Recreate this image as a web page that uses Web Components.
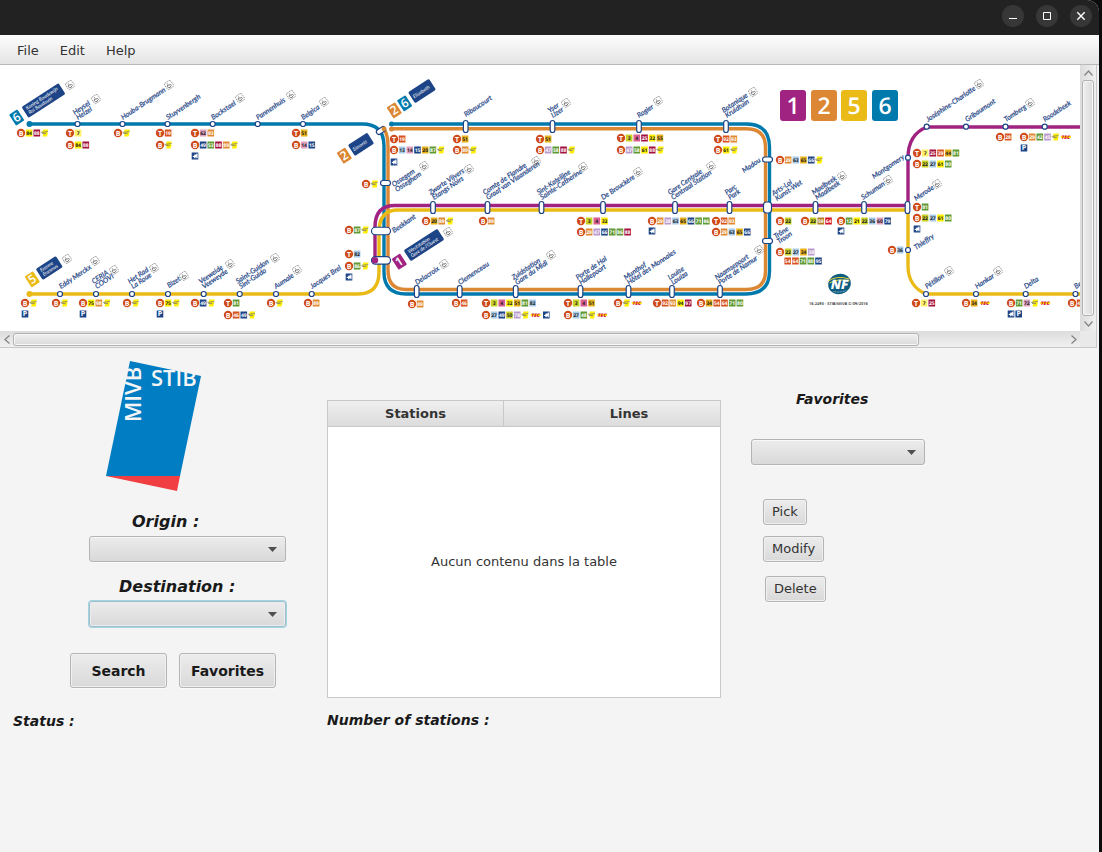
<!DOCTYPE html>
<html lang="en">
<head>
<meta charset="utf-8">
<title>STIB route planner</title>
<style>
  html, body { margin: 0; min-height: 100%; background: #0b0b0c; }
  body { font: 13px/18px "DejaVu Sans", Verdana, sans-serif; color: #333; }
</style>
</head>
<body>
<planner-window></planner-window>

<script>
function define(name, html, setup) {
  const template = document.createElement('template');
  template.innerHTML = html;
  customElements.define(name, class extends HTMLElement {
    constructor() {
      super();
      this.attachShadow({ mode: 'open' }).append(template.content.cloneNode(true));
    }
    connectedCallback() { if (setup) setup(this.shadowRoot, this); }
  });
}

/* ---------- window chrome ---------- */
define('title-bar', `
<style>
  :host { display: flex; justify-content: flex-end; align-items: flex-start; gap: 12px; height: 30px; padding: 5px 7px 0 0; background: #222; border-radius: 0 12px 0 0; }
  button { width: 22px; height: 22px; padding: 0; border: 0; border-radius: 50%; background: #373737; display: grid; place-items: center; }
  svg { display: block; }
</style>
<button aria-label="Minimize"><svg width="22" height="22" fill="none" stroke="#fff"><path d="M7 13.500h8"/></svg></button>
<button aria-label="Maximize"><svg width="22" height="22" fill="none" stroke="#fff"><path d="M7.500 7.500h7v7h-7z"/></svg></button>
<button aria-label="Close"><svg width="22" height="22" fill="none" stroke="#fff" stroke-width="1.4"><path d="M7.300 7.300l7.400 7.400M14.700 7.300l-7.400 7.400"/></svg></button>`);

define('menu-strip', `
<style>
  :host { display: flex; gap: 1px; box-sizing: border-box; height: 30px; padding-left: 7px; background: linear-gradient(#fdfdfd, #e4e4e4); border-bottom: 1px solid #b9b9b9; }
  button { font: inherit; color: inherit; border: 0; background: none; padding: 2px 10px 0; }
</style>
<button>File</button><button>Edit</button><button>Help</button>`);

/* ---------- scroll pane ---------- */
define('scroll-view', `
<style>
  :host { display: grid; grid-template-columns: minmax(0, 1fr) 16px; grid-template-rows: auto 16px; margin-right: 2px; border-right: 1px solid #c8c8c8; border-bottom: 1px solid #c8c8c8; background: #e9e9e9; }
  .view { overflow: hidden; background: #fff; }
  .bar { display: flex; align-items: stretch; }
  .v { flex-direction: column; background: linear-gradient(90deg, #dcdcdc, #f0f0f0); }
  .h { background: linear-gradient(#dcdcdc, #f0f0f0); }
  .track { flex: 1; display: flex; min-width: 0; min-height: 0; }
  .v .track { flex-direction: column; padding: 0 2px; }
  .h .track { padding: 2px 0 1px; }
  .thumb { box-sizing: border-box; border: 1px solid #b0b0b0; border-radius: 3px; box-shadow: inset 0 0 0 1px #f8f8f8; }
  .v .thumb { flex: 0 0 100%; background: linear-gradient(90deg, #efefef, #dadada); }
  .h .thumb { flex: 0 0 86%; background: linear-gradient(#efefef, #dadada); }
  button { border: 0; padding: 0; background: none; display: grid; place-items: center; }
  .v button { height: 15px; } .h button { width: 13px; }
  svg { fill: none; stroke: #858585; stroke-width: 1.3; }
</style>
<div class="view"><slot></slot></div>
<div class="bar v">
  <button aria-label="Scroll up"><svg width="9" height="6"><path d="M.5 5.500l4-4.500 4 4.500"/></svg></button>
  <div class="track"><div class="thumb"></div></div>
  <button aria-label="Scroll down"><svg width="9" height="6"><path d="M.5.500l4 4.500 4-4.500"/></svg></button>
</div>
<div class="bar h">
  <button aria-label="Scroll left"><svg width="6" height="9"><path d="M5.500.500l-4.500 4 4.500 4"/></svg></button>
  <div class="track"><div class="thumb"></div></div>
  <button aria-label="Scroll right"><svg width="6" height="9"><path d="M.5.500l4.500 4-4.500 4"/></svg></button>
</div>`);

/* ---------- metro map ---------- */
const NAVY = '#1d4486';
const LINE = { 1: '#a02382', 2: '#db8733', 5: '#eaba16', 6: '#007aad' };
const CHIP = {
  y: ['#fff000', '#222'], L: ['#fff26a', '#222'], Y: ['#e8b01b', '#222'], l: ['#c9d127', '#222'],
  r: ['#a3103c', '#fff'], o: ['#d8531f', '#fff'], O: ['#e08a35', '#fff'], g: ['#5f9a35', '#fff'],
  p: ['#dfa0bf', '#222'], P: ['#ba9acd', '#fff'], b: ['#a9cbea', '#222'], n: [NAVY, '#fff'],
  k: ['#d95f90', '#222'], e: ['#d4121f', '#fff'], w: ['#b57d1d', '#fff']
};
/* x, baseline y, text; "/" parts the two language versions */
const LABELS = [
  [78,120,'Heysel/Heizel'],[123,120,'Houba-Brugmann'],[168,120,'Stuyvenbergh'],[213,120,'Bockstael'],[258,120,'Pannenhuis'],[303,120,'Belgica'],
  [466,117,'Ribaucourt'],[553,118,'Yser/IJzer'],[639,118,'Rogier'],[727,118,'Botanique/Kruidtuin'],[744,173,'Madou'],
  [397,192,'Ossegem/Osseghem'],[434,200,'Zwarte Vijvers/Étangs Noirs'],[488,200,'Comte de Flandre/Graaf van Vlaanderen'],[542,200,'Sint-Katelijne/Sainte-Catherine'],
  [603,200,'De Brouckère'],[673,200,'Gare Centrale/Centraal Station'],[730,200,'Parc/Park'],[777,201,'Arts-Loi/Kunst-Wet'],[817,200,'Maelbeek/Maalbeek'],
  [863,200,'Schuman'],[916,201,'Merode'],[874,179,'Montgomery'],[394,233,'Beekkant'],[779,244,'Trône/Troon'],[916,250,'Thieffry'],
  [927,289,'Pétillon'],[977,289,'Hankar'],[1026,289,'Delta'],[1076,289,'Beaulieu'],
  [928,122,'Joséphine-Charlotte'],[967,122,'Gribaumont'],[1006,122,'Tomberg'],[1045,122,'Roodebeek'],
  [61,289,'Eddy Merckx'],[97,289,'CERIA/COOVI'],[133,289,'Het Rad/La Roue'],[169,288,'Bizet'],[204,289,'Veeweide/Veeweyde'],[241,289,'Saint-Guidon/Sint-Guido'],
  [276,289,'Aumale'],[312,289,'Jacques Brel'],[417,285,'Delacroix'],[460,285,'Clemenceau'],[517,285,'Zuidstation/Gare du Midi'],
  [581,285,'Porte de Hal/Hallepoort'],[629,285,'Munthof/Hôtel des Monnaies'],[673,285,'Louise/Louiza'],[720,285,'Naamsepoort/Porte de Namur']
];
/* x and y of the mode letter, then the letter and the connecting routes */
const ROWS = [
  [21,133,'B 84y 88r D'],[70,133,'T 7L'],[70,145,'B 84y 88r'],[118,133,'B D'],[160,133,'T 19o'],[160,145,'B D'],
  [195,133,'T 62p 93O'],[195,145,'B 49n 53g 88r 89O D'],[195,156,'S'],[296,133,'T 51Y'],[296,145,'B 14p 15n'],
  [394,139,'T 19o'],[394,150,'B 13b 14p 15n 20Y 87g D'],[394,162,'S'],[457,139,'T 51Y'],[457,150,'B 89O D'],
  [540,139,'T 51Y'],[540,150,'B 47P 58g 88r D'],[366,184,'B D'],[621,138,'T 3l 4k 25r 32y 55Y'],[621,150,'B 47P 58g 61y 88r D'],
  [718,139,'T 92o 93O'],[718,150,'B 61y D'],[780,160,'B 29O 63b 65Y 66n D'],
  [1000,137,'B 28o'],[1024,137,'B 29O 42g 45P D C'],[1024,148,'P'],[917,153,'T 7L 25r 39o 44Y 81g'],[917,164,'B 22l 27b 61y 80g'],
  [917,207,'T 81g'],[917,218,'B 22l 27b 61y 80g'],[917,229,'S'],[892,250,'B 36b'],[916,303,'T 7L 25r'],[966,303,'B 34Y C'],
  [1011,303,'B 71g 72p D C'],[1011,314,'S P'],[1072,303,'B 41o 72p'],[841,221,'B 12g 21y 22l 36b 60p 79n'],[841,231,'S'],
  [805,221,'B 22l 59w 64e'],[780,221,'B 22l'],[780,252,'B 22l 27b 34Y 38P'],[780,261,'- 54o 64o 71g 80g 95n'],
  [716,221,'T 92o 93O'],[716,232,'B 29O 63b 65Y 66n'],[652,221,'B 29O 38P 63b 65Y 66n 71g 86g'],[652,231,'S'],
  [581,221,'T 3l 4k 32y'],[581,232,'B 29O 47P 66n 71g 86g 88r'],[568,303,'T 3l 4k 51Y'],[568,315,'B 27b 48g D C'],
  [618,303,'B D C'],[657,303,'T 92o 93O 94y 97r'],[701,303,'B 34Y 54o 64o 71g 80g'],[426,221,'B 20Y 89O D'],[483,221,'B 89O'],
  [349,230,'B 87g D'],[349,254,'T 82b'],[349,266,'B 86g D'],[349,277,'S'],[412,304,'B 89O'],[456,303,'B 46o'],
  [486,303,'T 3l 4k 32y 51Y 81g 82b'],[486,315,'B 27b 49n 50l 78P D C S'],[308,303,'B 89O'],
  [25,303,'B D'],[25,314,'P'],[56,303,'B D'],[83,303,'B 75y 98O D'],[83,314,'P'],[127,303,'B D'],[160,303,'B 75y D'],[160,314,'P'],
  [195,303,'B 49n D'],[228,303,'T 81g'],[228,315,'B 46o 49n D'],[271,303,'B D']
];
const LIFTS = [[70,85],[96,99],[169,85],[240,98],[291,95],[324,102],[424,166],[469,169],[536,161],[566,103],[658,101],[753,92],[583,167],[638,172],[711,166],
  [979,84],[1030,103],[842,176],[888,180],[937,184],[67,259],[95,261],[114,270],[154,268],[184,276],[230,264],[275,258],[297,270],[448,232],[444,264],[551,255],[759,250],[949,271],[998,271]];

function drawMap() {
  let s = '';
  const path = (d, c) => { s += `<path d="${d}" fill="none" stroke="${c}" stroke-width="3.400"/>`; };
  path('M29 124H362Q384 124 384 146V272Q384 294 406 294H746Q769.500 294 769.500 271V147Q769.500 124 746 124H391', LINE[6]);
  path('M384 129Q388 135 388 146V270Q388 289.500 406 289.500H746Q765.500 289.500 765.500 271V147Q765.500 128.800 746 128.800H391', LINE[2]);
  path('M29 294H358Q379 294 379 272V232Q379 210 398 210H908V266C908 281 916 290 926 294H1120', LINE[5]);
  path('M375 260V227Q375 205.500 395 205.500H908V158C908 142 914 132 927 127H1120', LINE[1]);
  const dot = (x, y, c, r) => { s += `<circle cx="${x}" cy="${y}" r="${r || 3}" fill="${c}"/>`; };
  dot(29.500, 124, LINE[6]); dot(29.500, 294, LINE[5]); dot(391.500, 124, LINE[6], 2.500); dot(391.500, 129, LINE[2], 2.500);
  const stop = (x, y, w, h, t) => {
    s += `<rect x="${x - w / 2}" y="${y - h / 2}" width="${w}" height="${h}" rx="${Math.min(w, h) / 2}" fill="#fff" stroke="${NAVY}" stroke-width="1.200" ${t ? `transform="rotate(${t} ${x} ${y})"` : ''}/>`;
  };
  [77.5, 122.5, 167.5, 212.7, 257.7, 303].forEach(x => stop(x, 124, 5, 5));
  [60, 96, 132, 168, 203.7, 239.7, 276, 311.7, 926, 976, 1025.7, 1075.5].forEach(x => stop(x, 294, 5, 5));
  [926.7, 966, 1005.5, 1044.7].forEach(x => stop(x, 126.7, 5, 5));
  stop(908, 157.7, 5, 5); stop(908, 250, 5, 5);
  [465.7, 552.5, 639, 726].forEach(x => stop(x, 126.5, 4.6, 12));
  [433, 487.5, 541.5, 603, 675, 729.5, 815.5, 864, 907.5].forEach(x => stop(x, 207.5, 4.6, 12));
  [416.7, 459.7, 515.7, 580.5, 628.5, 672, 720].forEach(x => stop(x, 291.5, 4.6, 12));
  stop(385.5, 183, 10, 5); stop(767.5, 159.5, 10, 5); stop(767.5, 241, 10, 5);
  s += `<rect x="763.500" y="202" width="8" height="11" rx="3" fill="#fff" stroke="${NAVY}" stroke-width="1.200"/>`;
  stop(381, 231, 19, 7.5); stop(381, 260.3, 19, 7.5); dot(375, 260.3, LINE[1], 3.2);
  stop(381, 130.5, 10, 5, -33); dot(384, 128.800, LINE[2], 2.400);

  for (const [x, y, t] of LABELS) {
    const parts = t.split('/');
    s += `<g class="name" transform="translate(${x} ${y}) rotate(-34)">` +
      parts.map((p, i) => `<text x="0" y="${(i - parts.length + 1) * 6}">${p}</text>`).join('') + '</g>';
  }
  for (const [x, y] of LIFTS) {
    s += `<g transform="translate(${x} ${y}) rotate(-34)" fill="none" stroke="#555" stroke-width=".7"><rect x="-3.700" y="-3.700" width="7.400" height="7.400" rx="1.500" stroke="#888" stroke-dasharray="1.800 .6"/><path d="M-.5-2.200v2.400h1.800l.8 1.800M-1.200-.8a1.700 1.700 0 1 0 2 2.600"/></g>`;
  }

  const chip = (x, y, t, c) => {
    s += `<rect x="${x - 3.3}" y="${y - 3.5}" width="6.600" height="7" fill="${CHIP[c][0]}"/><text class="num" x="${x}" y="${y + 2}" fill="${CHIP[c][1]}">${t}</text>`;
  };
  for (const [x0, y, row] of ROWS) {
    let x = x0;
    row.split(' ').forEach(t => {
      if (t === 'B' || t === 'T') {
        s += `<circle cx="${x}" cy="${y}" r="4.200" fill="#cf4b1b"/><text class="mode" x="${x}" y="${y + 2.5}">${t}</text>`; x += .4;
      } else if (t === 'D') {
        s += `<path d="M${x - 1.5} ${y - 3.5}h5.500l-1.500 3h1l-1 4h-4.500l.8-3h-1.500z" fill="#fff000"/><path d="M${x - 3.500} ${y - .6}l7-.8M${x - 2.500} ${y + .6}h4" stroke="#777" stroke-width=".8"/>`;
      } else if (t === 'C') {
        x += 3;
        s += `<path d="M${x - 5} ${y}h10" stroke="#fff000" stroke-width="2"/><text class="tec" x="${x}" y="${y + 2}">TEC</text>`; x += 3;
      } else if (t === 'P') {
        chip(x, y, '', 'n'); s += `<text class="mode" x="${x}" y="${y + 2.3}">P</text>`;
      } else if (t === 'S') {
        chip(x, y, '', 'n'); s += `<path d="M${x - 2.6} ${y + .6}l2-1.400v-.8h2v-1h1.200v4.800h-1.200v-1h-1v1h-1.200v-1z" fill="#fff"/>`;
      } else if (t !== '-') {
        chip(x, y, t.slice(0, -1), t.slice(-1));
      }
      x += 7.7;
    });
  }

  /* terminus signs: line squares, then the name plate */
  const square = (x, y, n) => {
    s += `<g transform="translate(${x} ${y}) rotate(-33)"><rect x="-5" y="-6.500" width="10" height="13" rx="1" fill="${LINE[n]}"/><text class="sq" y="4">${n}</text></g>`;
  };
  const plate = (x, y, w, lines) => {
    const one = lines.length === 1;
    s += `<g transform="translate(${x} ${y}) rotate(-33)"><rect x="${-w / 2}" y="-6.500" width="${w}" height="13" rx="1.500" fill="${NAVY}"/>` +
      lines.map((t, i) => `<text class="plate" x="${(one ? 2 : 3) - w / 2}" y="${one ? 2 : i * 5 - 1}">${t}</text>`).join('') + '</g>';
  };
  square(16.7, 117.5, 6); plate(43.5, 100.5, 44, ['Koning Boudewijn', 'Roi Baudouin']);
  square(394.3, 110.3, 2); square(404.7, 103.3, 6); plate(422, 91, 25, ['Elisabeth']);
  square(344.3, 155.7, 2); plate(361, 144.3, 23, ['Simonis']);
  square(32.3, 279.3, 5); plate(49.3, 268, 24, ['Erasme', 'Erasmus']);
  square(399.3, 261.7, 1); plate(424, 245, 40, ['Weststation', 'Gare de l’Ouest']);

  [[780, 1], [811, 2], [841, 5], [872, 6]].forEach(([x, n]) => {
    s += `<rect x="${x}" y="90" width="26" height="31" rx="3" fill="${LINE[n]}"/><text class="big" x="${x + 13}" y="114">${n}</text>`;
  });
  s += `<g transform="translate(839.500 284)"><ellipse rx="11.500" ry="10" transform="rotate(-15)" fill="#0d5c82"/>
    <path d="M-11-3Q-3-9 10-5M-10-1Q-2-6 10-3" fill="none" stroke="#e9d22c" stroke-width="1"/><text class="nf" y="5">NF</text><path d="M-6 7.500q6 1.500 12-1" fill="none" stroke="#b8d8e4" stroke-width=".8" stroke-dasharray="1 .6"/></g>
    <text class="fine" x="809" y="305">16.2493 - STIB/MIVB © 09/2016</text>`;
  return s;
}

define('metro-map', `
<style>
  :host { display: block; }
  svg { display: block; width: 1260px; height: 266px; text-rendering: geometricPrecision; }
  text { font-family: "Open Sans", sans-serif; }
  .name text { font: italic 7px Lato, sans-serif; fill: #1d4486; stroke: #1d4486; stroke-width: .2; }
  .num { font-size: 5px; font-weight: 700; text-anchor: middle; }
  .mode { font-size: 7px; font-weight: 700; fill: #fff; text-anchor: middle; }
  .tec { font-size: 5px; font-style: italic; font-weight: 800; fill: #d5123c; text-anchor: middle; }
  .sq { font-size: 12px; font-weight: 600; fill: #fff; text-anchor: middle; }
  .plate { font: italic 5px Lato, sans-serif; fill: #fff; }
  .big { font-size: 23px; font-weight: 600; fill: #fff; text-anchor: middle; }
  .nf { font-size: 13px; font-style: italic; font-weight: 800; fill: #fff; text-anchor: middle; }
  .fine { font-size: 4px; font-weight: 600; fill: #222; }
</style>
<svg viewBox="0 65 1260 266" role="img" aria-label="Metro network map"></svg>`,
root => { root.querySelector('svg').innerHTML = drawMap(); });

/* ---------- form parts ---------- */
define('stib-logo', `
<style>
  :host { display: block; }
  svg { display: block; }
  text { font: 600 22px "Open Sans", sans-serif; fill: #f4f4f4; }
</style>
<svg width="96" height="131" viewBox="0 0 96 131" role="img" aria-label="STIB MIVB">
  <path d="M24 0L95 15 74 115H0z" fill="#007dc3"/>
  <path d="M0 115H74L71 130z" fill="#f03e42"/>
  <text x="45" y="25">STIB</text>
  <text transform="translate(35 61) rotate(-90)">MIVB</text>
</svg>`);

define('combo-field', `
<style>
  :host { display: flex; flex-direction: column; }
  label { font: italic bold 16px/20px "DejaVu Sans", sans-serif; color: #1a1a1a; padding-left: var(--label-indent, 0); }
  :host([small]) label { font-size: 14px; }
  .box { position: relative; margin-top: var(--label-gap, 4px); }
  select { appearance: none; display: block; box-sizing: border-box; width: 100%; height: 26px; border: 1px solid #b4b4b4; border-radius: 3px; background: linear-gradient(#ececec, #d9d9d9); box-shadow: inset 0 1px #f8f8f8, 0 1px #fafafa; outline: 0; }
  :host([active]) select { border-color: #a9bcc2; box-shadow: 0 0 0 1px #9fd3e6, inset 0 0 0 1px #e6f0f3; }
  svg { position: absolute; right: 9px; top: 11px; pointer-events: none; }
</style>
<label for="choice"></label>
<div class="box"><select id="choice"></select><svg width="9" height="5"><path d="M0 0h9L4.500 5z" fill="#4f4f4f"/></svg></div>`,
(root, el) => { root.querySelector('label').textContent = el.getAttribute('label'); });

define('push-button', `
<style>
  :host { display: block; }
  button { box-sizing: border-box; width: 100%; height: 26px; padding: 0 8px; border: 1px solid #b4b4b4; border-radius: 3px; background: linear-gradient(#ececec, #d9d9d9); box-shadow: inset 0 0 0 1px #f0f0f0, 0 1px #fafafa; font: 13px/18px "DejaVu Sans", sans-serif; color: #333; white-space: nowrap; }
  :host([strong]) button { height: 35px; font-size: 14px; font-weight: bold; color: #1a1a1a; }
</style>
<button><slot></slot></button>`);

define('result-table', `
<style>
  :host { display: flex; flex-direction: column; box-sizing: border-box; height: 298px; border: 1px solid #c8c8c8; background: #fff; overflow: hidden; }
  table { table-layout: fixed; width: 427px; border-collapse: separate; border-spacing: 0; }
  th { box-sizing: border-box; height: 26px; padding: 0; font-weight: bold; border-right: 1px solid #c8c8c8; border-bottom: 1px solid #c8c8c8; background: linear-gradient(#efefef, #dcdcdc); }
  .first { width: 176px; }
  p { flex: 1; margin: 0; display: grid; place-items: center; }
</style>
<table><thead><tr><th class="first" scope="col">Stations</th><th scope="col">Lines</th></tr></thead></table>
<p>Aucun contenu dans la table</p>`);

define('planner-window', `
<style>
  :host { display: flex; flex-direction: column; min-height: 100vh; margin-right: 3px; background: #f4f4f4; border-radius: 0 12px 0 0; }
  main { display: flex; align-items: flex-start; }
  .search { flex: 0 0 314px; padding: 13px 0 0 13px; }
  .fields { width: 197px; margin-left: 76px; display: grid; gap: 15px; padding-top: 20px; }
  .search stib-logo { margin-left: 93px; }
  .origin { --label-indent: 43px; }
  .destination { --label-indent: 30px; }
  .actions { display: grid; grid-template-columns: 97px 97px; gap: 12px; margin: 26px 0 0 57px; }
  .note { font: italic bold 14px/20px "DejaVu Sans", sans-serif; color: #1a1a1a; margin: 0; }
  .search .note { margin-top: 23px; }
  .result { flex: 0 1 394px; min-width: 0; padding-top: 52px; }
  .result .note { margin-top: 12px; }
  .saved { flex: 0 0 174px; padding: 41px 0 0 30px; }
  .saved combo-field { --label-indent: 45px; --label-gap: 30px; }
  .tools { display: flex; flex-direction: column; align-items: flex-start; gap: 11px; margin: 34px 0 0 12px; }
  .tools .remove { margin: 3px 0 0 2px; }
</style>
<title-bar></title-bar>
<menu-strip></menu-strip>
<scroll-view><metro-map></metro-map></scroll-view>
<main>
  <section class="search">
    <stib-logo></stib-logo>
    <div class="fields">
      <combo-field class="origin" label="Origin :"></combo-field>
      <combo-field class="destination" label="Destination :" active></combo-field>
    </div>
    <div class="actions"><push-button strong>Search</push-button><push-button strong>Favorites</push-button></div>
    <p class="note">Status :</p>
  </section>
  <section class="result">
    <result-table></result-table>
    <p class="note">Number of stations :</p>
  </section>
  <section class="saved">
    <combo-field small label="Favorites"></combo-field>
    <div class="tools"><push-button>Pick</push-button><push-button>Modify</push-button><push-button class="remove">Delete</push-button></div>
  </section>
</main>`);
</script>
</body>
</html>
